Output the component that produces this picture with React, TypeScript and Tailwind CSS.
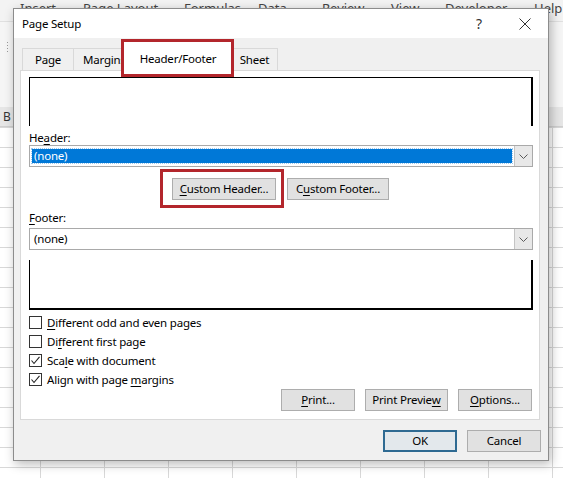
import React from "react"

const FONT = "font-['Noto_Sans','Segoe_UI',sans-serif]"
const TXT = "text-[11.5px] tracking-[-0.2px]"

function Mn({ children }: { children: React.ReactNode }) {
  return <span className="underline decoration-1 underline-offset-[2px]">{children}</span>
}

function Chevron() {
  return (
    <svg width="9" height="5" viewBox="0 0 9 5" fill="none">
      <path d="M0.5 0.5 L4.5 4.5 L8.5 0.5" stroke="#5a5a5a" strokeWidth="1" />
    </svg>
  )
}

function Check() {
  return (
    <svg width="11" height="11" viewBox="0 0 11 11" fill="none">
      <path d="M1.5 5.5 L4 8.5 L9.5 1.8" stroke="#222" strokeWidth="1.1" />
    </svg>
  )
}

function Checkbox({ checked, children }: { checked?: boolean; children: React.ReactNode }) {
  return (
    <div className="flex h-[19px] items-center gap-[5px]">
      <div className="flex h-[13px] w-[13px] items-center justify-center border border-[#333] bg-white">
        {checked && <Check />}
      </div>
      <span className={`${TXT} leading-none`}>{children}</span>
    </div>
  )
}

function Btn({ className, children }: { className: string; children: React.ReactNode }) {
  return (
    <div
      className={`flex h-[22px] items-center justify-center border border-[#adadad] bg-[#e1e1e1] ${TXT} leading-none ${className}`}
    >
      {children}
    </div>
  )
}

function Select({ highlighted }: { highlighted?: boolean }) {
  return (
    <div className="flex h-[22px] items-stretch border border-[#a9a9a9] bg-white">
      <div className="flex flex-1 items-center px-[2px]">
        {highlighted ? (
          <div className={`flex h-[14px] w-full items-center bg-[#0078d7] pl-[2px] ${TXT} leading-none text-white outline-1 outline-dotted outline-[#9cc8ee]`}>
            (none)
          </div>
        ) : (
          <span className={`pl-[2px] ${TXT} leading-none`}>(none)</span>
        )}
      </div>
      <div className="flex w-[18px] items-center justify-center border-l border-[#c4c4c4] bg-[#e8e8e8]">
        <Chevron />
      </div>
    </div>
  )
}

const ribbonTabs = [
  { label: "Insert", w: "w-[63px]" },
  { label: "Page Layout", w: "w-[101px]" },
  { label: "Formulas", w: "w-[74px]" },
  { label: "Data", w: "w-[64px]" },
  { label: "Review", w: "w-[69px]" },
  { label: "View", w: "w-[54px]" },
  { label: "Developer", w: "w-[89px]" },
  { label: "Help", w: "w-[30px]" },
]

export default function App() {
  return (
    <div className={`relative flex h-[478px] w-[563px] flex-col overflow-hidden bg-white text-black ${FONT}`}>
      {/* spreadsheet behind the dialog */}
      <div className="flex h-[22px] shrink-0 border-b border-[#e0e0e0] bg-[#f3f3f3] pl-[20px] pt-[1px]">
        {ribbonTabs.map((t) => (
          <span key={t.label} className={`${t.w} shrink-0 whitespace-nowrap text-[13px] leading-[14px] text-[#444]`}>
            {t.label}
          </span>
        ))}
      </div>
      <div className="h-[85px] shrink-0 bg-[#f5f5f5] pl-[7px] pt-[20px]">
        <div className="flex w-[2px] flex-col gap-[2px]">
          <span className="h-[1px] w-[1px] bg-[#999]" />
          <span className="h-[1px] w-[1px] bg-[#999]" />
          <span className="h-[1px] w-[1px] bg-[#999]" />
          <span className="h-[1px] w-[1px] bg-[#999]" />
        </div>
      </div>
      <div className="flex h-[20px] shrink-0 items-center border-b border-[#cfcfcf] bg-[#e6e6e6] pl-[3px] text-[12px] text-[#333]">
        B
      </div>
      <div className="flex-1 bg-white bg-[linear-gradient(to_right,#d8d8d8_1px,transparent_1px),linear-gradient(to_bottom,#d8d8d8_1px,transparent_1px)] bg-[size:64px_20px] bg-[position:40px_0px]" />

      {/* Page Setup dialog */}
      <div className="absolute left-[13px] top-[8px] flex h-[453px] w-[536px] flex-col border border-[#8c8c8c] bg-[#f0f0f0] shadow-[2px_3px_10px_rgba(0,0,0,0.28)]">
        <div className="flex h-[29px] shrink-0 items-center bg-white pl-[8px]">
          <span className={`${TXT} leading-none`}>Page Setup</span>
          <div className="ml-auto flex h-full items-center">
            <div className="flex w-[46px] justify-center">
              <span className="text-[14px] leading-[14px] text-[#333]">?</span>
            </div>
            <div className="flex w-[46px] items-center justify-center">
              <svg width="12" height="12" viewBox="0 0 12 12" fill="none">
                <path d="M0.5 0.5 L11.5 11.5 M11.5 0.5 L0.5 11.5" stroke="#333" strokeWidth="1" />
              </svg>
            </div>
          </div>
        </div>

        {/* tabs */}
        <div className={`flex h-[32px] shrink-0 items-end pl-[8px] ${TXT}`}>
          <div className="flex h-[22px] w-[52px] items-center justify-center border border-b-0 border-[#d9d9d9] bg-[#f0f0f0] leading-none">
            Page
          </div>
          <div className="flex h-[22px] w-[50px] items-center overflow-visible whitespace-nowrap border-t border-[#d9d9d9] bg-[#f0f0f0] pl-[9px] leading-none">
            Margins
          </div>
          <div className="relative z-10 -mb-px flex h-[29px] w-[108px] items-center justify-center bg-white pt-[4px] leading-none">
            Header/Footer
            <div className="pointer-events-none absolute -left-[3px] -right-[2px] -top-[3px] -bottom-[6px] border-[3px] border-[#b3262c]" />
          </div>
          <div className="flex h-[22px] w-[46px] items-center justify-center border border-b-0 border-l-0 border-[#d9d9d9] bg-[#f0f0f0] leading-none">
            Sheet
          </div>
        </div>

        {/* panel */}
        <div className="ml-[6px] flex h-[350px] w-[520px] shrink-0 flex-col border border-[#d9d9d9] bg-white pl-[8px] pr-[6px]">
          <div className="mt-[6px] h-[49px] shrink-0 border-l border-r-2 border-t border-black" />
          <div className={`mt-[4px] h-[15px] ${TXT} leading-[15px]`}>
            He<Mn>a</Mn>der:
          </div>
          <Select highlighted />
          <div className="mt-[11px] flex gap-[11px] pl-[143px]">
            <div className="relative">
              <Btn className="w-[104px]">
                <Mn>C</Mn>ustom Header...
              </Btn>
              <div className="pointer-events-none absolute -left-[12px] -right-[8px] -top-[9px] -bottom-[8px] border-[3px] border-[#b3262c]" />
            </div>
            <Btn className="w-[102px]">
              C<Mn>u</Mn>stom Footer...
            </Btn>
          </div>
          <div className={`mt-[10px] h-[15px] ${TXT} leading-[15px]`}>
            <Mn>F</Mn>ooter:
          </div>
          <div className="mt-[3px]">
            <Select />
          </div>
          <div className="mt-[10px] h-[50px] shrink-0 border-b-2 border-l border-r-2 border-black" />
          <div className="mt-[3px] flex flex-col">
            <Checkbox>
              <Mn>D</Mn>ifferent odd and even pages
            </Checkbox>
            <Checkbox>
              Di<Mn>f</Mn>ferent first page
            </Checkbox>
            <Checkbox checked>
              Sca<Mn>l</Mn>e with document
            </Checkbox>
            <Checkbox checked>
              Align with page <Mn>m</Mn>argins
            </Checkbox>
          </div>
          <div className="flex justify-end gap-[10px] pr-[1px]">
            <Btn className="w-[74px]">
              <Mn>P</Mn>rint...
            </Btn>
            <Btn className="w-[83px]">
              Print Previe<Mn>w</Mn>
            </Btn>
            <Btn className="w-[74px]">
              <Mn>O</Mn>ptions...
            </Btn>
          </div>
        </div>

        <div className="mt-[10px] flex justify-end gap-[10px] pr-[7px]">
          <div className={`flex h-[22px] w-[74px] items-center justify-center border-2 border-[#2f6a92] bg-[#e3e8ec] ${TXT} leading-none`}>
            OK
          </div>
          <Btn className="w-[74px]">Cancel</Btn>
        </div>
      </div>
    </div>
  )
}
